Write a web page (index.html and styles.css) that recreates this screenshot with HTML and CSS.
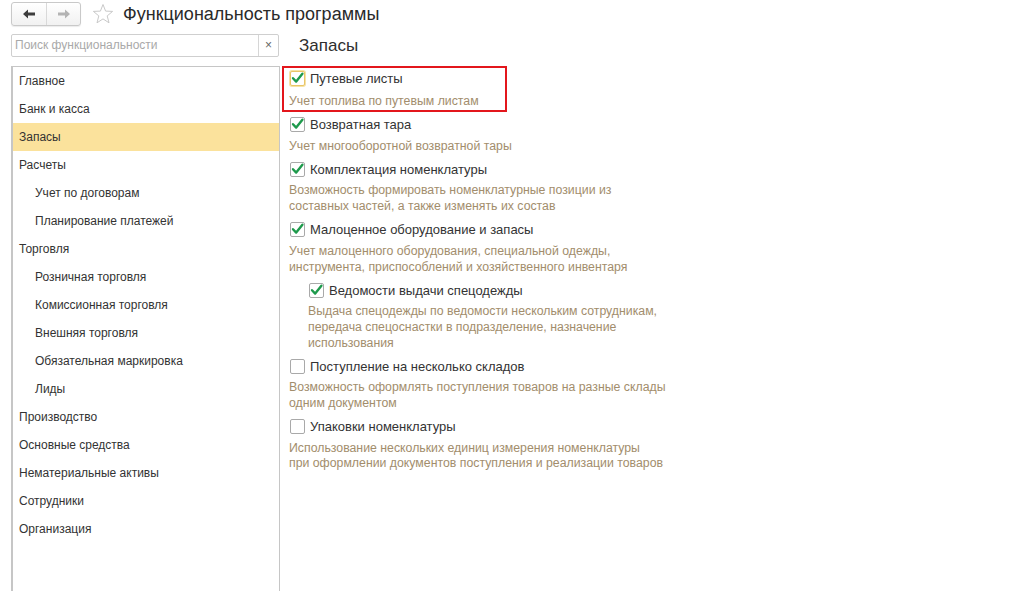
FILE: index.html
```html
<!DOCTYPE html>
<html lang="ru">
<head>
<meta charset="utf-8">
<title>Функциональность программы</title>
<link rel="stylesheet" href="styles.css">
</head>
<body>
<div class="app">
  <header class="topbar">
    <div class="navgroup">
      <button class="navbtn" type="button" aria-label="Назад">
        <svg width="14" height="12" viewBox="0 0 14 12"><path d="M1 6 L6 1.5 L6 4.5 L13 4.5 L13 7.5 L6 7.5 L6 10.5 Z" fill="#3d3d3d"/></svg>
      </button>
      <button class="navbtn" type="button" aria-label="Вперед">
        <svg width="14" height="12" viewBox="0 0 14 12"><path d="M13 6 L8 1.5 L8 4.5 L1 4.5 L1 7.5 L8 7.5 L8 10.5 Z" fill="#b4b4b4"/></svg>
      </button>
    </div>
    <svg class="star" width="22" height="22" viewBox="0 0 22 22"><path d="M11 1.5 L13.6 8.1 L20.6 8.4 L15.2 12.9 L17 19.8 L11 15.9 L5 19.8 L6.8 12.9 L1.4 8.4 L8.4 8.1 Z" fill="none" stroke="#c9c9c9" stroke-width="1" stroke-linejoin="round"/></svg>
    <h1 class="title">Функциональность программы</h1>
  </header>

  <div class="main">
    <aside class="sidebar">
      <div class="search">
        <span class="search-input">Поиск функциональности</span>
        <span class="search-clear">×</span>
      </div>
      <nav class="sections">
        <div class="sec">Главное</div>
        <div class="sec">Банк и касса</div>
        <div class="sec active">Запасы</div>
        <div class="sec">Расчеты</div>
        <div class="sec sub">Учет по договорам</div>
        <div class="sec sub">Планирование платежей</div>
        <div class="sec">Торговля</div>
        <div class="sec sub">Розничная торговля</div>
        <div class="sec sub">Комиссионная торговля</div>
        <div class="sec sub">Внешняя торговля</div>
        <div class="sec sub">Обязательная маркировка</div>
        <div class="sec sub">Лиды</div>
        <div class="sec">Производство</div>
        <div class="sec">Основные средства</div>
        <div class="sec">Нематериальные активы</div>
        <div class="sec">Сотрудники</div>
        <div class="sec">Организация</div>
      </nav>
    </aside>

    <section class="content">
      <h2 class="heading">Запасы</h2>
      <div class="options">
        <div class="opt marked">
          <div class="opt-row"><span class="cb checked focus"><svg width="15" height="15" viewBox="0 0 15 15"><path d="M3 7.2 L6.2 10.6 L12.4 2.8" fill="none" stroke="#1e9a4c" stroke-width="2.4" stroke-linecap="round" stroke-linejoin="round"/></svg></span><span class="opt-label">Путевые листы</span></div>
          <div class="opt-desc">Учет топлива по путевым листам</div>
        </div>
        <div class="opt">
          <div class="opt-row"><span class="cb checked"><svg width="15" height="15" viewBox="0 0 15 15"><path d="M3 7.2 L6.2 10.6 L12.4 2.8" fill="none" stroke="#1e9a4c" stroke-width="2.4" stroke-linecap="round" stroke-linejoin="round"/></svg></span><span class="opt-label">Возвратная тара</span></div>
          <div class="opt-desc">Учет многооборотной возвратной тары</div>
        </div>
        <div class="opt">
          <div class="opt-row"><span class="cb checked"><svg width="15" height="15" viewBox="0 0 15 15"><path d="M3 7.2 L6.2 10.6 L12.4 2.8" fill="none" stroke="#1e9a4c" stroke-width="2.4" stroke-linecap="round" stroke-linejoin="round"/></svg></span><span class="opt-label">Комплектация номенклатуры</span></div>
          <div class="opt-desc">Возможность формировать номенклатурные позиции из<br>составных частей, а также изменять их состав</div>
        </div>
        <div class="opt">
          <div class="opt-row"><span class="cb checked"><svg width="15" height="15" viewBox="0 0 15 15"><path d="M3 7.2 L6.2 10.6 L12.4 2.8" fill="none" stroke="#1e9a4c" stroke-width="2.4" stroke-linecap="round" stroke-linejoin="round"/></svg></span><span class="opt-label">Малоценное оборудование и запасы</span></div>
          <div class="opt-desc">Учет малоценного оборудования, специальной одежды,<br>инструмента, приспособлений и хозяйственного инвентаря</div>
        </div>
        <div class="opt nested">
          <div class="opt-row"><span class="cb checked"><svg width="15" height="15" viewBox="0 0 15 15"><path d="M3 7.2 L6.2 10.6 L12.4 2.8" fill="none" stroke="#1e9a4c" stroke-width="2.4" stroke-linecap="round" stroke-linejoin="round"/></svg></span><span class="opt-label">Ведомости выдачи спецодежды</span></div>
          <div class="opt-desc">Выдача спецодежды по ведомости нескольким сотрудникам,<br>передача спецоснастки в подразделение, назначение<br>использования</div>
        </div>
        <div class="opt">
          <div class="opt-row"><span class="cb"></span><span class="opt-label">Поступление на несколько складов</span></div>
          <div class="opt-desc">Возможность оформлять поступления товаров на разные склады<br>одним документом</div>
        </div>
        <div class="opt">
          <div class="opt-row"><span class="cb"></span><span class="opt-label">Упаковки номенклатуры</span></div>
          <div class="opt-desc">Использование нескольких единиц измерения номенклатуры<br>при оформлении документов поступления и реализации товаров</div>
        </div>
      </div>
    </section>
  </div>
</div>
</body>
</html>
```

FILE: styles.css
```css
* { box-sizing: border-box; }
html, body { margin: 0; padding: 0; }
body {
  background: #ffffff;
  font-family: Arial, "Liberation Sans", sans-serif;
  color: #333333;
  width: 1024px;
  height: 591px;
  overflow: hidden;
}
.app {
  height: 591px;
  display: flex;
  flex-direction: column;
  padding-left: 11px;
}
.topbar {
  height: 28px;
  display: flex;
  align-items: center;
}
.navgroup {
  display: flex;
  height: 24px;
  border: 1px solid #c9c9c9;
  border-radius: 3px;
  background: linear-gradient(#ffffff, #f1f1f1);
  box-shadow: 0 1px 1px rgba(0,0,0,0.08);
  overflow: hidden;
}
.navbtn {
  width: 34px;
  height: 22px;
  border: 0;
  padding: 0;
  background: transparent;
  display: flex;
  align-items: center;
  justify-content: center;
}
.navbtn + .navbtn { border-left: 1px solid #d9d9d9; }
.star { margin-left: 11px; margin-top: -1px; }
.title {
  margin: 0 0 0 9px;
  font-size: 18px;
  font-weight: normal;
  color: #2a2a2a;
  line-height: 22px;
}
.main {
  flex: 1;
  display: grid;
  grid-template-columns: 269px 1fr;
  min-height: 0;
}
.sidebar {
  display: flex;
  flex-direction: column;
  padding-top: 6px;
  min-height: 0;
}
.search {
  height: 23px;
  display: flex;
  border: 1px solid #cfcfcf;
  border-radius: 2px;
  background: #fff;
  width: 268px;
}
.search-input {
  flex: 1;
  font-size: 12px;
  color: #a9a9a9;
  padding-left: 3px;
  line-height: 21px;
}
.search-clear {
  width: 20px;
  border-left: 1px solid #d6d6d6;
  text-align: center;
  font-size: 12px;
  color: #666;
  line-height: 20px;
}
.sections {
  flex: 1;
  margin-top: 9px;
  width: 269px;
  border: 1px solid #c6c6c6;
  border-left-width: 2px;
  border-bottom: 0;
}
.sec {
  height: 28px;
  line-height: 29px;
  font-size: 12px;
  color: #333;
  padding-left: 6px;
}
.sec.sub { padding-left: 22px; }
.sec.active { background: #fbe29c; }
.content {
  padding-top: 6px;
}
.heading {
  margin: 0;
  height: 23px;
  line-height: 23px;
  padding-left: 19px;
  font-size: 17px;
  font-weight: normal;
  color: #2e2e2e;
}
.options {
  margin-top: 9px;
}
.opt {
  margin: 0 0 4px 10px;
}
.opt.marked {
  width: 225px;
  margin: 0 0 2px 2px;
  padding: 0 6px 0 6px;
  border: 2px solid #e3161c;
}
.opt.marked .opt-row { height: 20px; }
.opt.marked .opt-desc { margin-top: 6px; }
.opt.nested { margin-left: 29px; }
.opt-row {
  height: 22px;
  display: flex;
  align-items: center;
}
.cb {
  width: 15px;
  height: 15px;
  border: 1px solid #a9a9a9;
  border-radius: 2px;
  background: #fff;
  position: relative;
  flex: none;
}
.cb svg { position: absolute; left: -1px; top: -1px; }
.cb.focus { border-color: #e9c567; box-shadow: 0 0 0 1px #f6e3a6; }
.opt-label {
  margin-left: 5px;
  font-size: 13px;
  color: #333;
}
.opt-desc {
  margin-top: 3px;
  font-size: 12.3px;
  line-height: 15.7px;
  color: #a28d6c;
  margin-left: -1px;
}
```
